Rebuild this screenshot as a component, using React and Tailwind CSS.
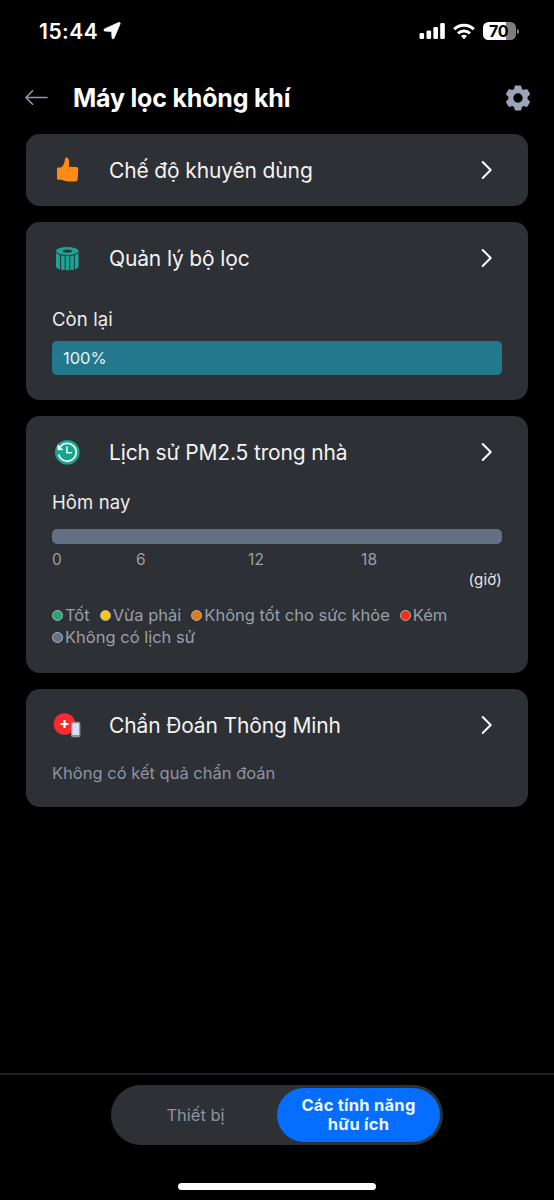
const legend = [
    { label: "Tốt", dot: "bg-[#1fa874]" },
    { label: "Vừa phải", dot: "bg-[#fcc419]" },
    { label: "Không tốt cho sức khỏe", dot: "bg-[#e07b1c]" },
    { label: "Kém", dot: "bg-[#fb2c16]" },
    { label: "Không có lịch sử", dot: "bg-[#64728a]" },
];

function ThumbIcon() {
    return (
        <svg className="w-[30px] h-[30px]" viewBox="0 0 30 30" fill="#fe8b17">
            <path d="M5 13.600c0-.8.500-1.200 1.200-1.200H9c2-1.500 3.500-4 3.800-7.200C13 3 13.600 2.300 14.600 2.500c2 .3 2.700 2.500 2.500 5l-.3 4.200 7.600.4c1.200.1 1.900.8 1.900 2l-.6 9.800c-.1 1.500-1 2.500-2.400 2.600-3.500.2-8.500.1-11.800-1.100-.8-.3-1.300-.6-2.300-.6H6.200c-.8 0-1.200-.4-1.200-1.200z" />
        </svg>
    );
}

function FilterIcon() {
    return (
        <svg className="w-[30px] h-[30px]" viewBox="0 0 30 30">
            <path d="M4 8v15.500c0 2.200 5 3.800 11.300 3.800s11.300-1.600 11.300-3.800V8z" fill="#1aa594" />
            <ellipse cx="15.300" cy="8" rx="11.900" ry="4.500" fill="#1aa594" stroke="#2d3034" strokeWidth="1" />
            <ellipse cx="15.300" cy="8" rx="4.600" ry="1.500" fill="#2d3034" />
            <path d="M8.600 12v15M13.200 13v15M17.800 13v15M22.300 12v15" stroke="#2d3034" strokeWidth="1" />
        </svg>
    );
}

function HistoryIcon() {
    return (
        <svg className="w-[30px] h-[30px]" viewBox="0 0 30 30" fill="none">
            <circle cx="15.300" cy="15.300" r="12.300" fill="#1aa38f" />
            <path d="M7.600 10.800A8.900 8.900 0 1 1 6.700 17.600" stroke="#e4fbf6" strokeWidth="1.800" />
            <path d="M6 7.700v5h5.200" fill="#e4fbf6" stroke="#e4fbf6" strokeWidth="1" />
            <path d="M14.900 9.600v6.200h5" stroke="#e4fbf6" strokeWidth="1.600" />
        </svg>
    );
}

function DiagnosisIcon() {
    return (
        <svg className="w-[30px] h-[30px]" viewBox="0 0 30 30">
            <circle cx="12.500" cy="14" r="10.800" fill="#fa2a2f" />
            <path d="M12.500 10v8M8.500 14h8" stroke="#fff" strokeWidth="2.200" />
            <rect x="19" y="11.700" width="9.400" height="15.500" rx="1.800" fill="#8c929c" />
            <rect x="20.300" y="13.200" width="6.800" height="11.800" rx="0.500" fill="#d5e2f6" />
        </svg>
    );
}

function Card({ icon, title, className, children }) {
    return (
        <section className={`bg-[#2d3034] rounded-[14px] px-[26px] ${className}`}>
            <div className="flex items-center h-[72px]">
                {icon}
                <h2 className="ml-[27px] pt-px flex-1 text-[21px] leading-none tracking-[-0.14px] text-[#f3f3f3] whitespace-nowrap">
                    {title}
                </h2>
                <svg className="w-3 h-5 mr-[9px]" viewBox="0 0 12 20" fill="none">
                    <path d="M1.700 2l8 8-8 8" stroke="#fff" strokeWidth="2" strokeLinecap="round" strokeLinejoin="round" />
                </svg>
            </div>
            {children}
        </section>
    );
}

function StatusBar() {
    return (
        <div className="flex items-center h-[62px] pl-[39px] pr-[35px] text-white">
            <span className="pt-px text-[21px] leading-none font-semibold tracking-[0.5px]">15:44</span>
            <svg className="ml-[5px] w-[18px] h-[18px]" viewBox="0 0 18 18" fill="#fff">
                <path d="M15.800.5c1-.4 1.700.3 1.300 1.300l-6 14.300c-.5 1.100-2 1-2.100-.3L8.700 9.400 2 9.100C.7 9 .5 7.400 1.600 6.900z" stroke="#fff" strokeWidth="0.800" />
            </svg>
            <div className="ml-auto flex items-center">
                <svg className="w-[26px] h-[18px]" viewBox="0 0 26 18" fill="#fff">
                    <rect x="0.500" y="11" width="4.600" height="6" rx="1.300" />
                    <rect x="7.500" y="8.500" width="4.600" height="8.500" rx="1.300" />
                    <rect x="14.400" y="5" width="4.600" height="12" rx="1.300" />
                    <rect x="21.200" y="1" width="4.600" height="16" rx="1.300" />
                </svg>
                <svg className="ml-2 w-[22px] h-[17px]" viewBox="0 0 22 17" fill="none" stroke="#fff" strokeWidth="3">
                    <path d="M1.200 6.300a14 14 0 0 1 19.600 0" />
                    <path d="M5 10.300a8.700 8.700 0 0 1 12 0" />
                    <path d="M11 16.300l-3-3.200a4.300 4.300 0 0 1 6 0z" fill="#fff" stroke="none" />
                </svg>
                <div className="ml-2 flex items-center justify-center w-[33px] h-[18px] rounded-[5.500px] bg-linear-to-r from-white from-70% to-[#7d7d7d] to-70% pr-[2px] text-black text-[16px] leading-none font-bold tracking-[-0.3px]">
                    70
                </div>
                <div className="ml-px w-[2px] h-[5px] rounded-r-full bg-[#7d7d7d]" />
            </div>
        </div>
    );
}

export default function App() {
    return (
        <div className="flex flex-col w-[554px] h-[1200px] bg-black overflow-hidden font-['Inter',sans-serif]">
            <StatusBar />

            {/* Header */}
            <header className="flex items-center h-[72px] pl-[25px] pr-[23px]">
                <svg className="w-[23px] h-4" viewBox="0 0 23 16" fill="none" stroke="#9299ab" strokeWidth="1.600" strokeLinecap="round" strokeLinejoin="round">
                    <path d="M22 7.500H1M7.500.8L1 7.500l6.500 6.700" />
                </svg>
                <h1 className="ml-[25px] pt-px text-[25px] leading-none font-bold text-white whitespace-nowrap tracking-[-0.2px]">
                    Máy lọc không khí
                </h1>
                <svg className="ml-auto -mt-px w-[26px] h-[26px]" viewBox="0 0 26 26">
                    <path
                        d="M9.600 1.500Q9.800.5 10.800.5h4.400q1 0 1.200 1l.5 2.500 1.700 1 2.500-.8q1-.3 1.500.5l2.200 3.700q.5.900-.3 1.600L22.600 11.700v2.600l1.900 1.700q.8.700.3 1.600l-2.200 3.700q-.5.800-1.500.5l-2.500-.8-1.700 1-.5 2.500q-.2 1-1.200 1h-4.400q-1 0-1.200-1L9.100 22l-1.700-1-2.500.8q-1 .3-1.500-.5L1.200 17.600q-.5-.9.300-1.600l1.900-1.700v-2.600L1.500 10q-.8-.7-.3-1.600l2.200-3.700q.5-.8 1.500-.5l2.500.8 1.700-1z"
                        fill="#9ca4b9"
                    />
                    <circle cx="13" cy="13" r="4.700" fill="#000" />
                </svg>
            </header>

            {/* Cards */}
            <main className="flex flex-col gap-4 px-[26px]">
                <Card icon={<ThumbIcon />} title="Chế độ khuyên dùng" className="h-[72px]" />

                <Card icon={<FilterIcon />} title="Quản lý bộ lọc" className="h-[178px]">
                    <p className="mt-[13px] text-[18.5px] leading-6 tracking-[0.1px] text-[#ececec]">Còn lại</p>
                    <div className="mt-[10px] flex items-center h-[34px] rounded-[5px] bg-[#24788e] pl-[11px] text-[16.5px] text-[#e2f4fa]">
                        100%
                    </div>
                </Card>

                <Card icon={<HistoryIcon />} title="Lịch sử PM2.5 trong nhà" className="h-[257px]">
                    <p className="mt-[2px] text-[18.5px] leading-6 tracking-[0.1px] text-[#ececec]">Hôm nay</p>
                    <div className="mt-[15px] h-[15px] rounded-[5px] bg-[#637083]" />
                    <div className="mt-[6px] flex text-[15.5px] leading-5 tracking-[0.2px] text-[#9a9fa9]">
                        <span className="w-[84px]">0</span>
                        <span className="w-[112px]">6</span>
                        <span className="w-[113px]">12</span>
                        <span>18</span>
                    </div>
                    <p className="text-right text-[15px] leading-5 tracking-[0.2px] text-[#e6e6e6]">(giờ)</p>
                    <ul className="mt-[14px] flex flex-wrap gap-x-[10px] text-[16.5px] leading-[22px] text-[#9a9fa9]">
                        {legend.map((item) => (
                            <li key={item.label} className="flex items-center whitespace-nowrap">
                                <span className={`w-[11px] h-[11px] mr-[2px] rounded-full border border-[#b3b3b3] ${item.dot}`} />
                                {item.label}
                            </li>
                        ))}
                    </ul>
                </Card>

                <Card icon={<DiagnosisIcon />} title="Chẩn Đoán Thông Minh" className="h-[118px]">
                    <p className="text-[16.5px] leading-6 text-[#8f94a3]">Không có kết quả chẩn đoán</p>
                </Card>
            </main>

            {/* Bottom switch */}
            <footer className="mt-auto h-[127px] flex flex-col items-center border-t-2 border-[#1f2021] pt-[10px]">
                <div className="flex items-center w-[332px] h-[60px] rounded-full bg-[#2d3034] p-[3px]">
                    <span className="flex-1 text-center text-[16.5px] text-[#8f949d]">Thiết bị</span>
                    <span className="flex items-center justify-center w-[163px] h-[54px] rounded-full bg-[#056dff] text-center text-[16.5px] leading-[19px] font-bold tracking-[0.25px] text-[#eef6ff]">
                        Các tính năng
                        <br />
                        hữu ích
                    </span>
                </div>
                <div className="mt-[38px] w-[198px] h-[7px] rounded-full bg-white" />
            </footer>
        </div>
    );
}
